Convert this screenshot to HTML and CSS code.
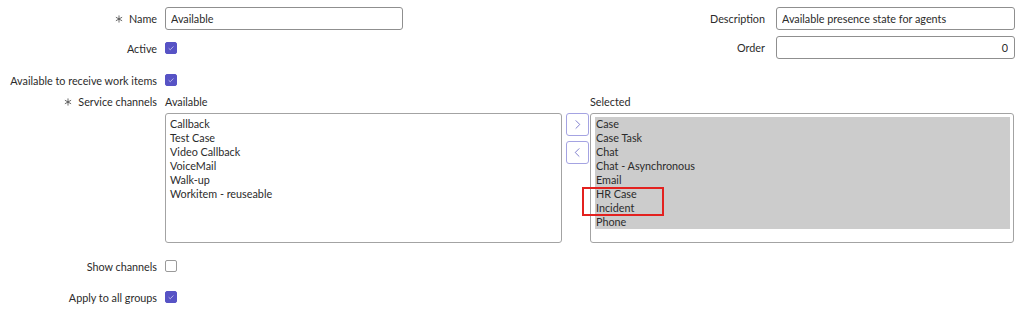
FILE: index.html
```html
<!DOCTYPE html>
<html lang="en">
<head>
    <meta charset="UTF-8">
    <meta name="viewport" content="width=device-width, initial-scale=1.0">
    <title>Agent Presence - Available</title>
    <link rel="stylesheet" href="styles.css">
</head>
<body>
    <div class="form">
        <div class="top">
            <div class="col-left">
                <div class="row row-name">
                    <label class="label"><svg class="req" viewBox="0 0 9 9"><path d="M4.5 0.5 V8.5 M1 2.5 L8 6.5 M1 6.5 L8 2.5"/></svg>Name</label>
                    <input class="text-input name-input" type="text" value="Available">
                </div>
                <div class="row row-active">
                    <label class="label">Active</label>
                    <span class="checkbox checked"><svg viewBox="0 0 12 12"><path d="M3.2 6.3 L5.1 8.1 L8.9 4.2"/></svg></span>
                </div>
                <div class="row row-receive">
                    <label class="label">Available to receive work items</label>
                    <span class="checkbox checked"><svg viewBox="0 0 12 12"><path d="M3.2 6.3 L5.1 8.1 L8.9 4.2"/></svg></span>
                </div>
            </div>
            <div class="col-right">
                <div class="row-r">
                    <label class="label-r">Description</label>
                    <input class="text-input desc-input" type="text" value="Available presence state for agents">
                </div>
                <div class="row-r row-order">
                    <label class="label-r">Order</label>
                    <input class="text-input desc-input num" type="text" value="0">
                </div>
            </div>
        </div>

        <div class="channels">
            <label class="label label-top"><svg class="req" viewBox="0 0 9 9"><path d="M4.5 0.5 V8.5 M1 2.5 L8 6.5 M1 6.5 L8 2.5"/></svg>Service channels</label>
            <div class="slush">
                <div class="bucket bucket-left">
                    <div class="caption">Available</div>
                    <div class="listbox">
                        <div class="opt">Callback</div>
                        <div class="opt">Test Case</div>
                        <div class="opt">Video Callback</div>
                        <div class="opt">VoiceMail</div>
                        <div class="opt">Walk-up</div>
                        <div class="opt">Workitem - reuseable</div>
                    </div>
                </div>
                <div class="moves">
                    <button class="move-btn"><svg viewBox="0 0 23 23"><path d="M9.5 7 L14 11.5 L9.5 16"/></svg></button>
                    <button class="move-btn"><svg viewBox="0 0 23 23"><path d="M13.5 7 L9 11.5 L13.5 16"/></svg></button>
                </div>
                <div class="bucket bucket-right">
                    <div class="caption">Selected</div>
                    <div class="listbox selected-box">
                        <div class="opt sel">Case</div>
                        <div class="opt sel">Case Task</div>
                        <div class="opt sel">Chat</div>
                        <div class="opt sel">Chat - Asynchronous</div>
                        <div class="opt sel">Email</div>
                        <div class="opt sel">HR Case</div>
                        <div class="opt sel">Incident</div>
                        <div class="opt sel">Phone</div>
                        <div class="highlight"></div>
                    </div>
                </div>
            </div>
        </div>

        <div class="row row-show">
            <label class="label">Show channels</label>
            <span class="checkbox"></span>
        </div>
        <div class="row row-apply">
            <label class="label">Apply to all groups</label>
            <span class="checkbox checked"><svg viewBox="0 0 12 12"><path d="M3.2 6.3 L5.1 8.1 L8.9 4.2"/></svg></span>
        </div>
    </div>
</body>
</html>
```

FILE: styles.css
```css
body {
    margin: 0;
    background: #ffffff;
    font-family: Lato, "Open Sans", sans-serif;
    font-size: 10.8px;
    color: #2b2b2b;
}
.form {
    padding: 7px 9px 0 0;
}
.top {
    display: flex;
    justify-content: space-between;
}
.row {
    display: flex;
    align-items: center;
    gap: 8px;
    height: 24px;
}
.row-name {
    height: 23px;
}
.row-active {
    margin-top: 6px;
}
.row-receive {
    margin-top: 8px;
}
.label {
    width: 157px;
    flex-shrink: 0;
    text-align: right;
    white-space: nowrap;
}
.req {
    width: 8px;
    height: 8px;
    margin-right: 6px;
    fill: none;
    stroke: #444;
    stroke-width: 0.9;
}
.text-input {
    box-sizing: border-box;
    height: 23px;
    border: 1px solid #8f8f8f;
    border-radius: 3px;
    padding: 0 5px;
    font-family: inherit;
    font-size: 10.8px;
    color: #2b2b2b;
    background: #fff;
}
.name-input {
    width: 238px;
}
.col-right {
    display: flex;
    flex-direction: column;
    gap: 6px;
}
.row-r {
    display: flex;
    align-items: center;
    gap: 11px;
    justify-content: flex-end;
}
.desc-input {
    width: 239px;
}
.num {
    text-align: right;
    padding-right: 6px;
}
.checkbox {
    box-sizing: border-box;
    width: 12px;
    height: 12px;
    border: 1px solid #9a9a9a;
    border-radius: 2px;
    background: #fff;
    display: flex;
}
.checkbox.checked {
    background: #5753c5;
    border-color: #5753c5;
}
.checkbox svg {
    width: 10px;
    height: 10px;
    fill: none;
    stroke: #d6d4f3;
    stroke-width: 0.9;
}
.channels {
    display: flex;
    gap: 8px;
    margin-top: 4px;
}
.label-top {
    line-height: 12px;
}
.slush {
    display: flex;
    align-items: flex-start;
}
.caption {
    line-height: 12px;
    margin-bottom: 5px;
}
.listbox {
    box-sizing: border-box;
    position: relative;
    height: 130px;
    border: 1px solid #a3a3a3;
    border-radius: 3px;
    padding: 3px 4px;
    line-height: 14px;
}
.bucket-left .listbox {
    width: 397px;
}
.selected-box {
    width: 424px;
    padding: 3px 3px 3px 4px;
}
.opt {
    height: 14px;
    white-space: nowrap;
}
.opt.sel {
    background: #cccccc;
    padding-left: 1px;
}
.moves {
    display: flex;
    flex-direction: column;
    gap: 5px;
    margin: 17px 1px 0 4px;
}
.move-btn {
    box-sizing: border-box;
    width: 23px;
    height: 23px;
    padding: 0;
    border: 1px solid #a4a3e2;
    border-radius: 3px;
    background: #fff;
    display: flex;
}
.move-btn svg {
    width: 21px;
    height: 21px;
    fill: none;
    stroke: #7473c9;
    stroke-width: 1;
}
.highlight {
    position: absolute;
    left: -9px;
    top: 73px;
    width: 82px;
    height: 29px;
    box-sizing: border-box;
    border: 2px solid #e3211f;
}
.row-show {
    margin-top: 11px;
}
.row-apply {
    margin-top: 7px;
}
```
